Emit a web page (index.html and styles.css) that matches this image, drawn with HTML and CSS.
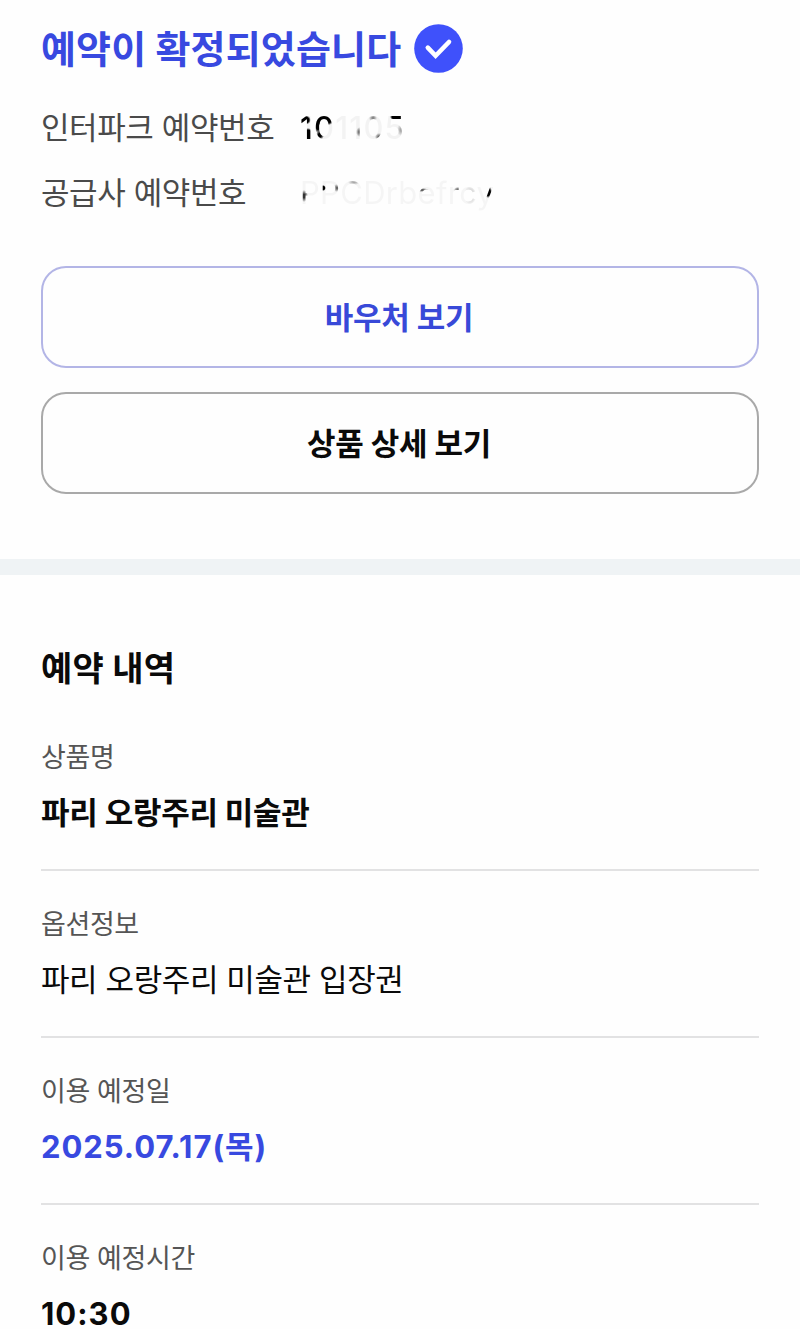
FILE: index.html
```
<!DOCTYPE html>
<html lang="ko">
<head>
    <meta charset="UTF-8">
    <meta name="viewport" content="width=device-width, initial-scale=1.0">
    <title>예약 내역</title>
    <link rel="stylesheet" href="styles.css">
</head>
<body>
    <section class="summary">
        <h1 class="summary-title">
            <span class="summary-text">예약이 확정되었습니다</span>
            <svg class="check-icon" viewBox="0 0 49 49" aria-hidden="true">
                <circle cx="24.5" cy="24.5" r="24.3" fill="#3f51fb"/>
                <path d="M13.8 23.6l7.8 8.2L35 18" fill="none" stroke="#fff" stroke-width="4.6" stroke-linecap="round"/>
            </svg>
        </h1>
        <dl class="numbers">
            <dt>인터파크 예약번호</dt>
            <dd><span class="masked masked-order">101105</span></dd>
            <dt>공급사 예약번호</dt>
            <dd><span class="masked masked-supplier">PPCDrbefrcy</span></dd>
        </dl>
        <div class="actions">
            <button class="btn btn-primary" type="button">바우처 보기</button>
            <button class="btn" type="button">상품 상세 보기</button>
        </div>
    </section>

    <section class="details">
        <h2>예약 내역</h2>
        <dl class="detail-item">
            <dt>상품명</dt>
            <dd class="strong">파리 오랑주리 미술관</dd>
        </dl>
        <dl class="detail-item">
            <dt>옵션정보</dt>
            <dd>파리 오랑주리 미술관 입장권</dd>
        </dl>
        <dl class="detail-item">
            <dt>이용 예정일</dt>
            <dd class="strong date">2025.07.17(목)</dd>
        </dl>
        <dl class="detail-item">
            <dt>이용 예정시간</dt>
            <dd class="strong time">10:30</dd>
        </dl>
    </section>
</body>
</html>
```

FILE: styles.css
```
* {
    box-sizing: border-box;
    margin: 0;
    padding: 0;
}

body {
    height: 1329px;
    overflow: hidden;
    background-color: #fefefe;
    color: #0a0a0a;
    font-family: Inter, "Noto Sans CJK KR", sans-serif;
}

.summary {
    height: 575px;
    padding: 20px 41px 0;
    border-bottom: 16px solid #eff3f5;
}

.summary-title {
    display: flex;
    align-items: center;
    gap: 13px;
    height: 56px;
    color: #3849e0;
    font-size: 38px;
    font-weight: 700;
    letter-spacing: 0.15px;
    white-space: nowrap;
}

.summary-text {
    padding-bottom: 4px;
}

.check-icon {
    width: 49px;
    height: 49px;
}

.numbers {
    display: grid;
    grid-template-columns: 259px 1fr;
    grid-auto-rows: 65px;
    align-items: center;
    margin-top: 19px;
    font-size: 31px;
}

.numbers dt {
    padding-bottom: 4px;
    color: #4a4a4a;
    letter-spacing: -0.4px;
}

/* Only fragments of the booking numbers stay visible */
.masked {
    display: inline-block;
    height: 40px;
    line-height: 40px;
    color: transparent;
    vertical-align: top;
    -webkit-background-clip: text;
    background-clip: text;
}

.masked-order {
    font-weight: 500;
    letter-spacing: 1.2px;
    background-image:
        radial-gradient(ellipse 7px 5px at 4px 12px, #000 70%, transparent),
        radial-gradient(ellipse 6px 8px at 8px 28px, #000 75%, transparent),
        radial-gradient(ellipse 11px 7px at 24px 11px, #000 75%, transparent),
        radial-gradient(ellipse 4px 7px at 18px 18px, #000 50%, transparent),
        radial-gradient(ellipse 4px 5px at 20px 27px, #000 40%, transparent),
        radial-gradient(ellipse 8px 4px at 98px 9px, #000 75%, transparent),
        radial-gradient(ellipse 4px 5px at 60px 24px, #555 20%, transparent),
        radial-gradient(ellipse 4px 4px at 73px 10px, #888 20%, transparent),
        radial-gradient(ellipse 4px 4px at 79px 29px, #666 20%, transparent),
        radial-gradient(ellipse 4px 6px at 101px 22px, #aaa 20%, transparent),
        linear-gradient(rgba(0, 0, 0, 0.045), rgba(0, 0, 0, 0.045));
}

.masked-supplier {
    background-image:
        radial-gradient(ellipse 4px 6px at 4px 23px, #333 30%, transparent),
        radial-gradient(ellipse 3px 3px at 23px 15px, #000 60%, transparent),
        radial-gradient(ellipse 4px 4px at 37px 15px, #666 20%, transparent),
        radial-gradient(ellipse 6px 3px at 54px 9px, #aaa 20%, transparent),
        radial-gradient(ellipse 7px 2px at 122px 17px, #555 20%, transparent),
        radial-gradient(ellipse 4px 3px at 158px 17px, #444 20%, transparent),
        radial-gradient(ellipse 6px 9px at 170px 22px, #bbb 20%, transparent),
        radial-gradient(ellipse 4px 6px at 188px 19px, #000 60%, transparent),
        linear-gradient(rgba(0, 0, 0, 0.035), rgba(0, 0, 0, 0.035));
    letter-spacing: 0.3px;
}

.actions {
    display: flex;
    flex-direction: column;
    gap: 24px;
    margin-top: 41px;
}

.btn {
    height: 102px;
    padding: 0 2px 4px 0;
    border: 2px solid #a9a9a9;
    border-radius: 25px;
    background-color: #fefefe;
    color: #0a0a0a;
    font-family: inherit;
    font-size: 31px;
    font-weight: 700;
    letter-spacing: -0.2px;
}

.btn-primary {
    border-color: #b3b5e6;
    color: #3849d8;
}

.details {
    padding: 62px 41px 0;
}

.details h2 {
    height: 67px;
    font-size: 34px;
    font-weight: 700;
    line-height: 64px;
    letter-spacing: 0.2px;
}

.detail-item {
    height: 167px;
    padding-top: 32px;
    border-bottom: 2px solid #e2e2e3;
}

.detail-item:last-child {
    height: 125px;
    border-bottom: none;
}

.detail-item dt {
    height: 44px;
    color: #555;
    font-size: 27px;
    line-height: 44px;
    letter-spacing: -0.4px;
}

.detail-item dd {
    height: 66px;
    font-size: 31px;
    line-height: 66px;
    letter-spacing: -0.4px;
}

.detail-item .strong {
    font-weight: 700;
    letter-spacing: -0.25px;
}

.detail-item .date {
    color: #3849e0;
    letter-spacing: 0.95px;
}

.detail-item .time {
    height: 48px;
    padding-top: 18px;
    letter-spacing: 1px;
    line-height: 30px;
}
```
